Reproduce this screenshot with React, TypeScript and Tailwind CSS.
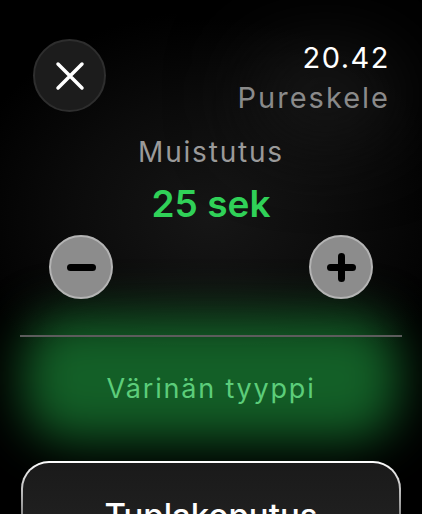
const CloseIcon = () => (
  <svg width="30" height="30" viewBox="0 0 30 30" fill="none">
    <path d="M3 3 L27 27 M27 3 L3 27" stroke="white" strokeWidth="3.5" strokeLinecap="round" />
  </svg>
)

const RoundButton = ({kind}: {kind: "minus" | "plus"}) => (
  <button className="relative flex h-[64px] w-[64px] items-center justify-center rounded-full border-2 border-[#b4b4b4] bg-[#8c8c8c]">
    <span className="h-[7px] w-[29px] rounded-full bg-black" />
    {kind === "plus" && (
      <span className="absolute h-[29px] w-[7px] rounded-full bg-black" />
    )}
  </button>
)

export default function App() {
  return (
    <div className="relative h-[514px] w-[422px] overflow-hidden bg-black font-['Inter','Liberation_Sans',sans-serif]">
      {/* soft gray light behind the stepper */}
      <div className="absolute inset-0 bg-[radial-gradient(ellipse_60%_40%_at_50%_42%,#161616_0%,#0b0b0b_55%,#000_100%)]" />
      <div className="absolute left-[250px] top-[50px] h-[90px] w-[150px] rounded-full bg-[#181818] blur-2xl" />
      {/* green glow around the section title */}
      <div className="absolute left-[24px] right-[24px] top-[316px] h-[124px] rounded-[44px] bg-[#135f27] blur-[24px]" />

      <div className="relative flex flex-col">
        <div className="flex items-start justify-between pl-[33px] pr-[32px] pt-[38px]">
          <button className="mt-[1px] flex h-[73px] w-[73px] items-center justify-center rounded-full border-2 border-[#2e2e2e] bg-[#1c1c1c]">
            <CloseIcon />
          </button>
          <div className="text-right text-[29px] leading-[40px] tracking-[1.5px]">
            <div className="text-white">20.42</div>
            <div className="text-[#8a8a8a] tracking-[2px]">Pureskele</div>
          </div>
        </div>

        <div className="mt-[16px] text-center text-[28px] leading-[36px] tracking-[1.8px] text-[#9a9a9a]">
          Muistutus
        </div>
        <div className="mt-[12px] text-center text-[37px] font-semibold leading-[44px] text-[#30d158]">
          25 sek
        </div>

        <div className="mt-[9px] flex justify-between pl-[49px] pr-[49px]">
          <RoundButton kind="minus" />
          <RoundButton kind="plus" />
        </div>

        <div className="mx-[20px] mt-[36px] h-[2px] bg-[#5c5c5c]" />

        <div className="mt-[34px] text-center text-[27px] leading-[36px] tracking-[1.8px] text-[#5ccd7a]">
          Värinän tyyppi
        </div>

        <div className="mx-[21px] mt-[54px] rounded-[28px] bg-gradient-to-b from-white via-[#9a9a9a] to-[#3a3a3a] px-[2px] pt-[2px]">
          <div className="h-[90px] rounded-[26px] bg-gradient-to-b from-[#1a1a1a] to-[#232323] pt-[30px] text-center text-[33px] font-medium leading-[44px] text-white">
            Tuplakoputus
          </div>
        </div>
      </div>
    </div>
  )
}
